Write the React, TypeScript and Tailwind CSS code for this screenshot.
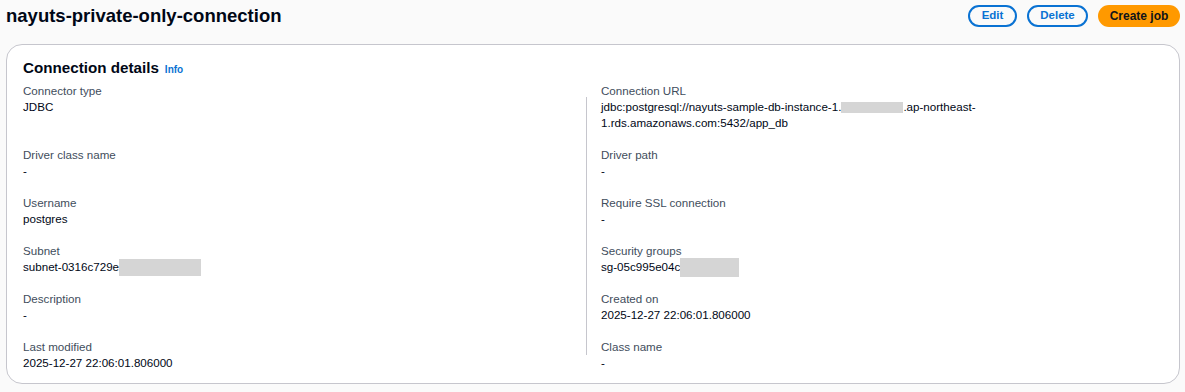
import React from "react";

const Redact = ({ w, h = 17 }: { w: number; h?: number }) => (
  <span className="inline-block bg-[#d5d5d5] align-middle" style={{ width: w, height: h }} />
);

function Item({ label, children, className, multi }: { label: string; children: React.ReactNode; className: string; multi?: boolean }) {
  return (
    <div className={className}>
      <div className="text-[11.6px] leading-4 h-4 text-[#414d5c]">{label}</div>
      <div className={`text-[11.6px] leading-4 text-[#000716] ${multi ? "" : "h-4 flex items-center"}`}>{children}</div>
    </div>
  );
}

export default function App() {
  return (
    <div className="w-[1185px] h-[392px] bg-[#fafafa] font-['Liberation_Sans',Arial,sans-serif] overflow-hidden">
      <div className="flex items-center justify-between h-[32px] pl-[6px] pr-[5px]">
        <h1 className="text-[18.5px] leading-[22px] font-bold text-[#000716]">nayuts-private-only-connection</h1>
        <div className="flex items-center gap-[10px]">
          <button className="h-[22px] w-[49px] rounded-full border-2 border-[#0972d3] text-[#0972d3] text-[11.5px] font-bold leading-none">Edit</button>
          <button className="h-[22px] w-[61px] rounded-full border-2 border-[#0972d3] text-[#0972d3] text-[11.5px] font-bold leading-none">Delete</button>
          <button className="h-[22px] w-[82px] rounded-full bg-[#ff9900] text-[#0f141a] text-[12px] font-bold leading-none">Create job</button>
        </div>
      </div>
      <div className="mt-[12px] ml-[6px] mr-[5px] bg-white border border-[#c6c6cd] rounded-[16px] px-4 pt-[12px] pb-[12px]">
        <div className="flex items-baseline h-[22px]">
          <h2 className="text-[15.2px] leading-[22px] font-bold text-[#000716]">Connection details</h2>
          <span className="ml-[6px] text-[10px] font-bold text-[#0972d3]">Info</span>
        </div>
        <div className="mt-[4px] grid grid-cols-[563px_1px_1fr] gap-y-4">
          <div className="col-start-2 row-start-1 row-span-6 bg-[#c6c6cd] mt-[14px] mb-[16px]" />
          <Item className="col-start-1 row-start-1" label="Connector type">JDBC</Item>
          <Item className="col-start-3 row-start-1 pl-[14px]" label="Connection URL" multi>
            <div className="h-4 flex items-center">
              jdbc:postgresql://nayuts-sample-db-instance-1.<Redact w={62} h={11} />.ap-northeast-
            </div>
            <div className="h-4">1.rds.amazonaws.com:5432/app_db</div>
          </Item>
          <Item className="col-start-1 row-start-2" label="Driver class name">-</Item>
          <Item className="col-start-3 row-start-2 pl-[14px]" label="Driver path">-</Item>
          <Item className="col-start-1 row-start-3" label="Username">postgres</Item>
          <Item className="col-start-3 row-start-3 pl-[14px]" label="Require SSL connection">-</Item>
          <Item className="col-start-1 row-start-4" label="Subnet">
            subnet-0316c729e<Redact w={82} />
          </Item>
          <Item className="col-start-3 row-start-4 pl-[14px]" label="Security groups">
            sg-05c995e04c<Redact w={59} h={19} />
          </Item>
          <Item className="col-start-1 row-start-5" label="Description">-</Item>
          <Item className="col-start-3 row-start-5 pl-[14px]" label="Created on">2025-12-27 22:06:01.806000</Item>
          <Item className="col-start-1 row-start-6" label="Last modified">2025-12-27 22:06:01.806000</Item>
          <Item className="col-start-3 row-start-6 pl-[14px]" label="Class name">-</Item>
        </div>
      </div>
    </div>
  );
}
